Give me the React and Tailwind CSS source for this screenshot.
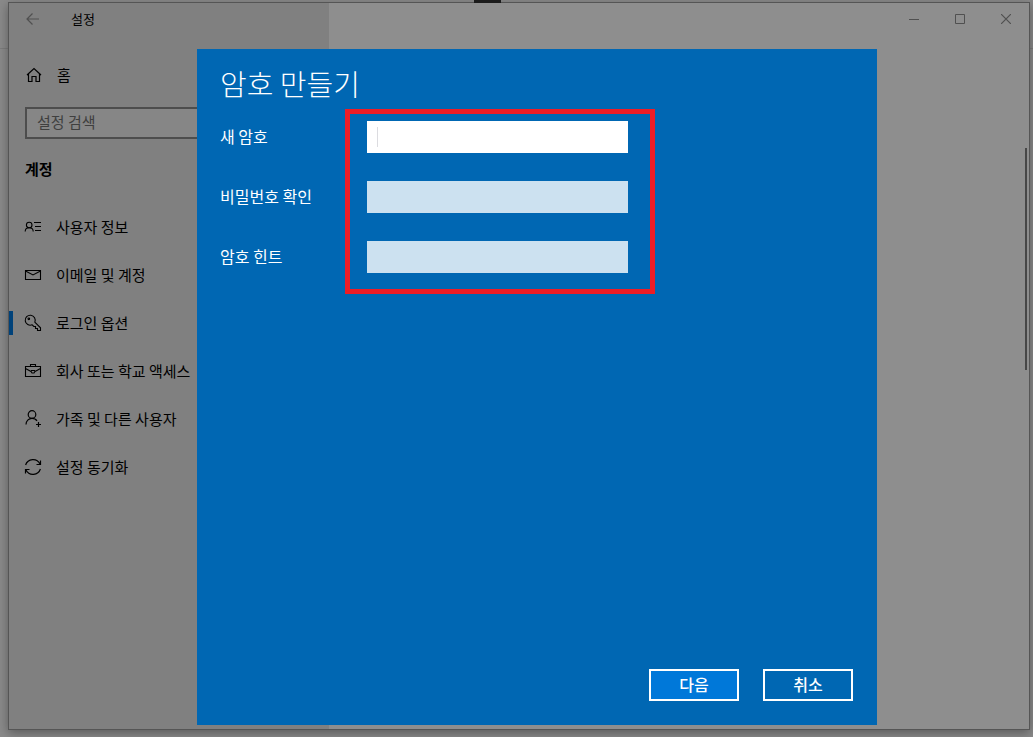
import React from "react";

const BackIcon = () => (
  <svg width="14" height="12" viewBox="0 0 14 12" fill="none" stroke="currentColor" strokeWidth="1.2">
    <path d="M1 6h12M6.5 0.5L1 6l5.5 5.5" />
  </svg>
);

const HomeIcon = () => (
  <svg width="18" height="18" viewBox="0 0 18 18" fill="none" stroke="currentColor" strokeWidth="1.2">
    <path d="M2 9L9 2.5L16 9M3.5 8v7.5h3.5v-5h4v5h3.5V8" />
  </svg>
);

const UserInfoIcon = () => (
  <svg width="18" height="18" viewBox="0 0 18 18" fill="none" stroke="currentColor" strokeWidth="1.1">
    <circle cx="5.2" cy="7" r="2.8" />
    <path d="M1.2 13.5c0-2.4 1.8-3.8 4-3.8s4 1.4 4 3.8M10 4.5h7M11 8.5h6M11 12.5h6" />
  </svg>
);

const MailIcon = () => (
  <svg width="18" height="18" viewBox="0 0 18 18" fill="none" stroke="currentColor" strokeWidth="1.1">
    <path d="M1.5 4.5h15v9h-15zM1.5 5l7.5 4l7.5-4" />
  </svg>
);

const KeyIcon = () => (
  <svg width="18" height="18" viewBox="0 0 18 18" fill="none" stroke="currentColor" strokeWidth="1.1">
    <path d="M10.8 8.2L16.5 13.8V16.5H13.5V14.5H11.5V12.5H9.8L8.2 10.8A5 5 0 1 1 10.8 8.2z" />
    <circle cx="4.8" cy="4.8" r="0.8" />
  </svg>
);

const BriefcaseIcon = () => (
  <svg width="18" height="18" viewBox="0 0 18 18" fill="none" stroke="currentColor" strokeWidth="1.1">
    <path d="M1.5 4.5h15v10h-15zM6.5 4.5v-2h5v2M1.5 6.5L7 9.5M16.5 6.5L11 9.5M7.5 8.5h3l.5 1l-1 1.5h-2l-1-1.5z" />
  </svg>
);

const FamilyIcon = () => (
  <svg width="18" height="18" viewBox="0 0 18 18" fill="none" stroke="currentColor" strokeWidth="1.2">
    <circle cx="8" cy="4.5" r="3.8" />
    <path d="M2 14.5c0-3.6 2.6-6.2 6-6.2c2.2 0 4 1 5 2.6M14.5 12v5M12 14.5h5" />
  </svg>
);

const SyncIcon = () => (
  <svg width="18" height="18" viewBox="0 0 18 18" fill="none" stroke="currentColor" strokeWidth="1.2">
    <path d="M1.6 7A7.8 7.8 0 0 1 16 6M16.4 11A7.8 7.8 0 0 1 2 12M16.5 2.5V6.5H12.5M1.5 15.5V11.5H5.5" />
  </svg>
);

const menuItems = [
  { label: "사용자 정보", icon: UserInfoIcon },
  { label: "이메일 및 계정", icon: MailIcon },
  { label: "로그인 옵션", icon: KeyIcon, active: true },
  { label: "회사 또는 학교 액세스", icon: BriefcaseIcon },
  { label: "가족 및 다른 사용자", icon: FamilyIcon },
  { label: "설정 동기화", icon: SyncIcon },
];

const fields = [
  { id: "new-password", label: "새 암호", type: "password", focused: true },
  { id: "confirm-password", label: "비밀번호 확인", type: "password" },
  { id: "password-hint", label: "암호 힌트", type: "text" },
];

const Sidebar = () => (
  <aside className="w-80 shrink-0 bg-[#808080] text-black">
    <div className="flex h-8 items-center">
      <button aria-label="뒤로" className="flex w-12 justify-center text-[#505050]">
        <BackIcon />
      </button>
      <span className="ml-3.5 text-[13px]">설정</span>
    </div>
    <a href="#home" className="mt-4 flex h-12 items-center gap-3.5 pl-4 text-[15px]">
      <HomeIcon />
      홈
    </a>
    <div className="mt-2 px-4">
      <input
        type="search"
        aria-label="설정 검색"
        placeholder="설정 검색"
        className="block h-8 w-full border-2 border-[#4d4d4d] bg-[#868686] px-2.5 pb-1 text-[15px] placeholder:text-[#3f3f3f]"
      />
    </div>
    <h2 className="mt-1.5 flex h-12 items-center pl-4 text-[15px] font-bold">계정</h2>
    <nav className="mt-2.5">
      {menuItems.map(({ label, icon: Icon, active }) => (
        <a key={label} href="#menu" className="flex h-12 items-center text-[15px]">
          <span className={active ? "h-6 w-1 bg-[#00427a]" : "h-6 w-1"} />
          <span className="ml-[11px] mr-3.5">
            <Icon />
          </span>
          {label}
        </a>
      ))}
    </nav>
  </aside>
);

const WindowControls = () => (
  <div className="flex h-8 text-[#505050]">
    <button aria-label="최소화" className="flex w-[46px] items-center justify-center">
      <svg width="10" height="10" viewBox="0 0 10 10" stroke="currentColor">
        <path d="M0 5.5h10" />
      </svg>
    </button>
    <button aria-label="최대화" className="flex w-[46px] items-center justify-center">
      <svg width="10" height="10" viewBox="0 0 10 10" fill="none" stroke="currentColor">
        <path d="M0.5 0.5h9v9h-9z" />
      </svg>
    </button>
    <button aria-label="닫기" className="flex w-[46px] items-center justify-center">
      <svg width="10" height="10" viewBox="0 0 10 10" stroke="currentColor" strokeWidth="1.2">
        <path d="M0 0l10 10M10 0L0 10" />
      </svg>
    </button>
  </div>
);

const PasswordDialog = () => (
  <form
    role="dialog"
    aria-labelledby="dialog-title"
    className="flex flex-1 flex-col bg-[#0067b3] pb-6 pl-[23px] pr-6 pt-3.5 text-white"
  >
    <h1 id="dialog-title" className="text-[29px] font-light leading-10">
      암호 만들기
    </h1>
    <div className="mt-1.5 flex">
      <div className="flex w-[125px] flex-col gap-7 pt-[11px]">
        {fields.map(({ id, label }) => (
          <label key={id} htmlFor={id} className="flex h-8 items-center">
            {label}
          </label>
        ))}
      </div>
      <div className="flex w-[310px] flex-col gap-7 border-5 border-[#ee1c25] pb-4 pl-[17px] pr-[22px] pt-[7px]">
        {fields.map(({ id, type, focused }) => (
          <div key={id} className="relative">
            <input
              id={id}
              type={type}
              className={
                focused
                  ? "block h-8 w-full bg-white px-2.5 text-black outline-none"
                  : "block h-8 w-full bg-[#cce1f0] px-2.5 text-black outline-none"
              }
            />
            {focused && <span className="absolute left-2.5 top-1.5 h-5 w-px bg-[#dcdce0]" />}
          </div>
        ))}
      </div>
    </div>
    <div className="mt-auto flex justify-end gap-6 font-medium">
      <button type="button" className="h-8 w-[90px] border-2 border-white bg-[#0078d9] pb-0.5 leading-none">
        다음
      </button>
      <button type="button" className="h-8 w-[90px] border-2 border-white pb-0.5 leading-none">
        취소
      </button>
    </div>
  </form>
);

const App = () => {
  return (
    <div className="relative flex min-h-screen bg-[#8a8a8a] pb-[7px] pl-2 pr-[3px] pt-0.5 font-['Noto_Sans_CJK_KR',sans-serif]">
      {/* desktop showing behind the window */}
      <div className="absolute inset-x-0 top-12 h-px bg-[#7c7c7c]" />
      <div className="relative flex flex-1 border border-[#555555] bg-[#8e8e8e] shadow-[0_3px_10px_rgba(0,0,0,0.35)]">
        <Sidebar />
        <main className="flex flex-1 flex-col items-end">
          <WindowControls />
          <div className="mr-0.5 mt-[113px] h-[222px] w-0.5 bg-[#474747]" />
        </main>
        <div className="absolute inset-0 flex pb-1 pl-[188px] pr-[152px] pt-[46px]">
          <PasswordDialog />
        </div>
      </div>
      <div className="absolute left-[474px] top-0 h-[3px] w-[27px] bg-[#1b1b1b]" />
    </div>
  );
};

export default App;
